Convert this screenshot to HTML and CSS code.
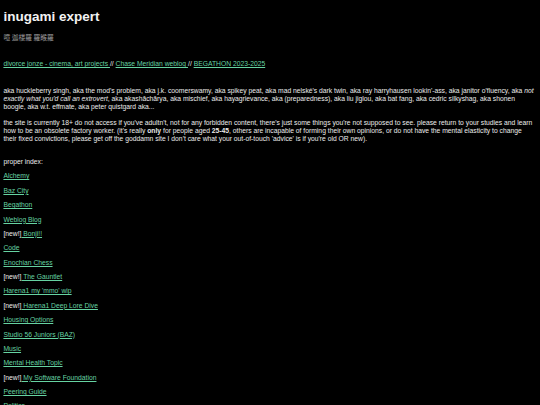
FILE: index.html
```html
<!DOCTYPE html>
<html>
<head>
<meta charset="utf-8">
<link rel="stylesheet" href="styles.css">
</head>
<body>
<h1 class="title">inugami expert</h1>
<p class="sub">噫 迦楼羅 羅睺羅</p>
<p class="nav"><a href="#">divorce jonze - cinema, art projects </a> // <a href="#">Chase Meridian weblog </a> // <a href="#">BEGATHON 2023-2025</a></p>
<p class="aka">aka huckleberry singh, aka the mod's problem, aka j.k. coomerswamy, aka spikey peat, aka mad nelské's dark twin, aka ray harryhausen lookin'-ass, aka janitor o'fluency, aka <i>not exactly what you'd call an extrovert</i>, aka akashāchārya, aka mischief, aka hayagrievance, aka (preparedness), aka liu jiglou, aka bat fang, aka cedric silkyshag, aka shonen boogie, aka w.t. effmate, aka peter quistgard aka...</p>
<p class="site">the site is currently 18+ do not access if you've adultn't, not for any forbidden content, there's just some things you're not supposed to see. please return to your studies and learn how to be an obsolete factory worker. (it's really <b>only</b> for people aged <b>25-45</b>, others are incapable of forming their own opinions, or do not have the mental elasticity to change their fixed convictions, please get off the goddamn site I don't care what your out-of-touch 'advice' is if you're old OR new).</p>
<p class="idx">proper index:</p>
<p class="item"><a href="#">Alchemy</a></p>
<p class="item"><a href="#">Baz City</a></p>
<p class="item"><a href="#">Begathon</a></p>
<p class="item"><a href="#">Weblog Blog</a></p>
<p class="item">[new!]<a href="#"> Bonji!!</a></p>
<p class="item"><a href="#">Code</a></p>
<p class="item"><a href="#">Enochian Chess</a></p>
<p class="item">[new!]<a href="#"> The Gauntlet</a></p>
<p class="item"><a href="#">Harena1 my 'mmo' wip</a></p>
<p class="item">[new!]<a href="#"> Harena1 Deep Lore Dive</a></p>
<p class="item"><a href="#">Housing Options</a></p>
<p class="item"><a href="#">Studio 56 Juniors (BAZ)</a></p>
<p class="item"><a href="#">Music</a></p>
<p class="item"><a href="#">Mental Health Topic</a></p>
<p class="item">[new!]<a href="#"> My Software Foundation</a></p>
<p class="item"><a href="#">Peering Guide</a></p>
<p class="item"><a href="#">Politics</a></p>
</body>
</html>
```
FILE: styles.css
```css
html, body {
  background: #000;
}
body {
  margin: 0 3.4px;
  padding: 0;
  color: #ececec;
  font-family: "Liberation Sans", Arial, "Noto Sans CJK JP", sans-serif;
  font-size: 6.75px;
  line-height: 8px;
}
p {
  margin: 0;
}
.title {
  font-size: 13.5px;
  line-height: 16px;
  margin: 9px 0 0;
  font-weight: bold;
  color: #f2f2f2;
}
.sub {
  font-family: "Noto Sans CJK JP", sans-serif;
  font-size: 6.75px;
  color: #9a9a9a;
  margin-top: 8px;
}
.nav {
  margin-top: 19px;
}
.aka {
  margin-top: 19px;
}
.site {
  margin-top: 8px;
}
.idx {
  margin-top: 15px;
}
.item {
  margin-top: 6.375px;
}
a {
  color: #66d3a2;
  text-decoration: underline;
}
```
